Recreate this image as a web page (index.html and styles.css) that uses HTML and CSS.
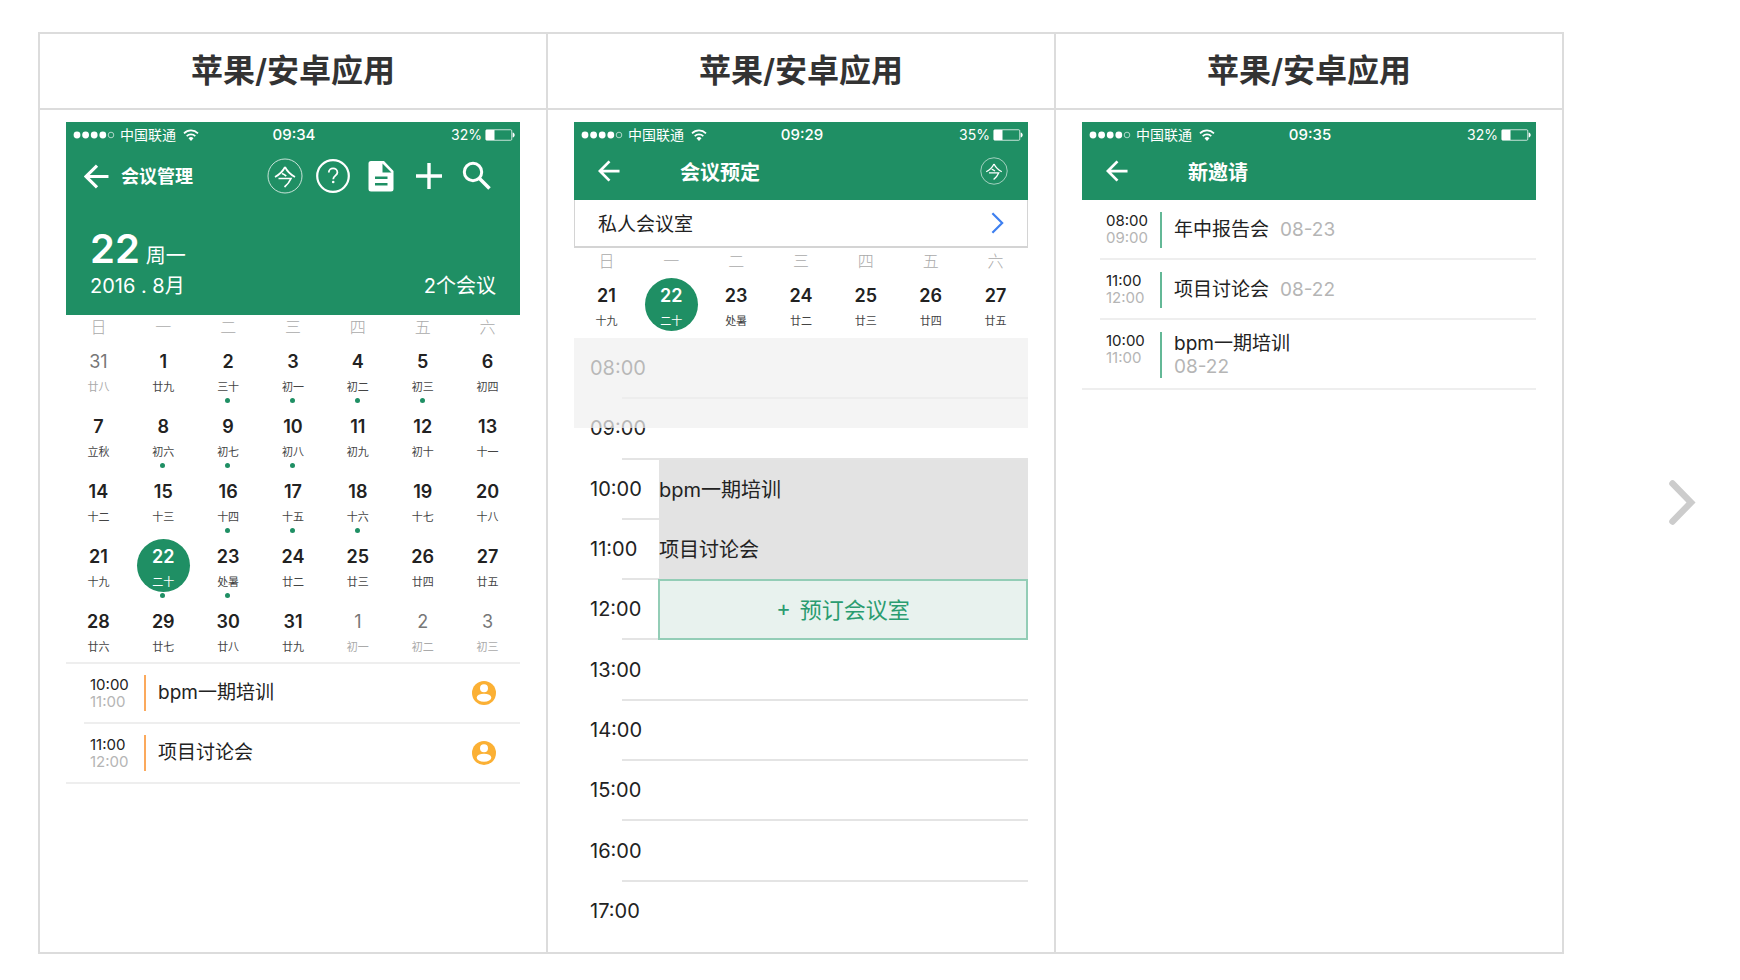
FILE: index.html
```html
<!DOCTYPE html>
<html lang="zh-CN">
<head>
<meta charset="utf-8">
<title>苹果/安卓应用</title>
<link rel="stylesheet" href="styles.css">
</head>
<body>
<svg class="sprite" aria-hidden="true">
  <symbol id="signal" viewBox="0 0 42 10"><g fill="#fff"><circle cx="4" cy="5" r="3.4"/><circle cx="12.6" cy="5" r="3.4"/><circle cx="21.2" cy="5" r="3.4"/><circle cx="29.8" cy="5" r="3.4"/></g><circle cx="38" cy="5" r="2.8" fill="none" stroke="#fff" stroke-width=".8" opacity=".8"/></symbol>
  <symbol id="wifi" viewBox="0 0 16 12"><g fill="none" stroke="#fff" stroke-width="1.7"><path d="M1 4.3a10 10 0 0 1 14 0"/><path d="M3.7 7.1a6.200 6.200 0 0 1 8.600 0"/></g><path d="M8 12 5.500 9.300a3.600 3.600 0 0 1 5 0z" fill="#fff"/></symbol>
  <symbol id="battery" viewBox="0 0 30 12"><rect x=".75" y=".75" width="26" height="10.500" rx="1" fill="none" stroke="#fff" opacity=".75"/><rect x="1" y="1" width="8.500" height="10" fill="#fff"/><path d="M27.600 3.500c2.800.5 2.800 4.500 0 5z" fill="#fff"/></symbol>
  <symbol id="back" viewBox="0 0 24 24"><path d="M23.500 12H2.500M12.500 1.500 2 12l10.500 10.500" fill="none" stroke="#fff" stroke-width="3"/></symbol>
  <symbol id="today" viewBox="0 0 36 36"><circle cx="18" cy="18" r="17" fill="none" stroke="#fff" opacity=".75"/><path d="M18 9C16 13 12.500 16.500 8 19M18 9c2 4 5.500 7.500 10 10M15 15.500c2 .8 3 1.500 4.200 2.700M11.500 20.500h12.500c-1.500 3.500-3.500 6-6.500 8.500" fill="none" stroke="#fff" stroke-width="1.700"/></symbol>
  <symbol id="help" viewBox="0 0 36 36"><circle cx="18" cy="18" r="15.800" fill="none" stroke="#fff" stroke-width="2.200"/><path d="M13.800 14.600c0-5.600 8.600-5.600 8.600 0 0 3-4.200 3.200-4.200 6.600" fill="none" stroke="#fff" stroke-width="1.800"/><circle cx="18.200" cy="24" r="1.300" fill="#fff"/></symbol>
  <symbol id="doc" viewBox="0 0 36 36"><path fill="#fff" fill-rule="evenodd" d="M8 3H21l9.500 10v18a2.500 2.500 0 0 1-2.500 2.500H8A2.500 2.500 0 0 1 5.500 31V5.500A2.500 2.500 0 0 1 8 3zM19.500 5.500V14.500h9zM12 18.500v2.500h12.500v-2.500zM12 25v2.500h12.500V25z"/></symbol>
  <symbol id="plus" viewBox="0 0 36 36"><path d="M18 5v26M5 18h26" stroke="#fff" stroke-width="3.400"/></symbol>
  <symbol id="search" viewBox="0 0 36 36"><circle cx="14" cy="14" r="8.700" fill="none" stroke="#fff" stroke-width="3"/><path d="m20 20 10.500 10.500" stroke="#fff" stroke-width="3.600"/></symbol>
  <symbol id="person" viewBox="0 0 24 24"><circle cx="12" cy="12" r="12" fill="#fbb034"/><circle cx="12" cy="7.300" r="4" fill="#fff"/><ellipse cx="12" cy="16.700" rx="7.300" ry="4" fill="#fff"/></symbol>
</svg>

<main class="page">
  <table class="showcase">
    <thead>
      <tr><th scope="col">苹果/安卓应用</th><th scope="col">苹果/安卓应用</th><th scope="col">苹果/安卓应用</th></tr>
    </thead>
    <tbody>
      <tr>
        <td>
          <section class="phone">
            <header class="head">
              <div class="status">
                <span class="carrier"><svg class="signal"><use href="#signal"/></svg>中国联通<svg class="wifi"><use href="#wifi"/></svg></span>
                <time class="clock">09:34</time>
                <span class="power">32%<svg class="battery"><use href="#battery"/></svg></span>
              </div>
              <div class="bar bar-tools">
                <button class="icon-btn back" aria-label="返回"><svg><use href="#back"/></svg></button>
                <h2 class="bar-title small">会议管理</h2>
                <div class="tools">
                  <button class="icon-btn" aria-label="今天"><svg><use href="#today"/></svg></button>
                  <button class="icon-btn" aria-label="帮助"><svg><use href="#help"/></svg></button>
                  <button class="icon-btn" aria-label="文档"><svg><use href="#doc"/></svg></button>
                  <button class="icon-btn" aria-label="新建"><svg><use href="#plus"/></svg></button>
                  <button class="icon-btn" aria-label="搜索"><svg><use href="#search"/></svg></button>
                </div>
              </div>
              <div class="summary">
                <p class="today"><strong>22</strong><span>周一</span></p>
                <p class="month"><span>2016 . 8月</span><span>2个会议</span></p>
              </div>
            </header>
            <div class="week"><span>日</span><span>一</span><span>二</span><span>三</span><span>四</span><span>五</span><span>六</span></div>
            <div class="days">
              <button class="day muted"><b>31</b><i>廿八</i></button>
              <button class="day"><b>1</b><i>廿九</i></button>
              <button class="day dot"><b>2</b><i>三十</i></button>
              <button class="day dot"><b>3</b><i>初一</i></button>
              <button class="day dot"><b>4</b><i>初二</i></button>
              <button class="day dot"><b>5</b><i>初三</i></button>
              <button class="day"><b>6</b><i>初四</i></button>
              <button class="day"><b>7</b><i>立秋</i></button>
              <button class="day dot"><b>8</b><i>初六</i></button>
              <button class="day dot"><b>9</b><i>初七</i></button>
              <button class="day dot"><b>10</b><i>初八</i></button>
              <button class="day"><b>11</b><i>初九</i></button>
              <button class="day"><b>12</b><i>初十</i></button>
              <button class="day"><b>13</b><i>十一</i></button>
              <button class="day"><b>14</b><i>十二</i></button>
              <button class="day"><b>15</b><i>十三</i></button>
              <button class="day dot"><b>16</b><i>十四</i></button>
              <button class="day dot"><b>17</b><i>十五</i></button>
              <button class="day dot"><b>18</b><i>十六</i></button>
              <button class="day"><b>19</b><i>十七</i></button>
              <button class="day"><b>20</b><i>十八</i></button>
              <button class="day"><b>21</b><i>十九</i></button>
              <button class="day dot selected"><b>22</b><i>二十</i></button>
              <button class="day dot"><b>23</b><i>处暑</i></button>
              <button class="day"><b>24</b><i>廿二</i></button>
              <button class="day"><b>25</b><i>廿三</i></button>
              <button class="day"><b>26</b><i>廿四</i></button>
              <button class="day"><b>27</b><i>廿五</i></button>
              <button class="day"><b>28</b><i>廿六</i></button>
              <button class="day"><b>29</b><i>廿七</i></button>
              <button class="day"><b>30</b><i>廿八</i></button>
              <button class="day"><b>31</b><i>廿九</i></button>
              <button class="day muted"><b>1</b><i>初一</i></button>
              <button class="day muted"><b>2</b><i>初二</i></button>
              <button class="day muted"><b>3</b><i>初三</i></button>
            </div>
            <ul class="events agenda">
              <li class="event"><p class="span"><time>10:00</time><time>11:00</time></p><p class="topic">bpm一期培训</p><svg class="person"><use href="#person"/></svg></li>
              <li class="event"><p class="span"><time>11:00</time><time>12:00</time></p><p class="topic">项目讨论会</p><svg class="person"><use href="#person"/></svg></li>
            </ul>
          </section>
        </td>
        <td>
          <section class="phone">
            <header class="head">
              <div class="status">
                <span class="carrier"><svg class="signal"><use href="#signal"/></svg>中国联通<svg class="wifi"><use href="#wifi"/></svg></span>
                <time class="clock">09:29</time>
                <span class="power">35%<svg class="battery"><use href="#battery"/></svg></span>
              </div>
              <div class="bar">
                <button class="icon-btn back" aria-label="返回"><svg><use href="#back"/></svg></button>
                <h2 class="bar-title">会议预定</h2>
                <button class="icon-btn now" aria-label="今天"><svg><use href="#today"/></svg></button>
              </div>
            </header>
            <button class="room"><span>私人会议室</span><svg class="chevron" viewBox="0 0 14 24"><path d="m1.500 1.500 10.500 10.500-10.500 10.500" fill="none" stroke="#3f80f0" stroke-width="2.400"/></svg></button>
            <div class="week"><span>日</span><span>一</span><span>二</span><span>三</span><span>四</span><span>五</span><span>六</span></div>
            <div class="days">
              <button class="day"><b>21</b><i>十九</i></button>
              <button class="day selected"><b>22</b><i>二十</i></button>
              <button class="day"><b>23</b><i>处暑</i></button>
              <button class="day"><b>24</b><i>廿二</i></button>
              <button class="day"><b>25</b><i>廿三</i></button>
              <button class="day"><b>26</b><i>廿四</i></button>
              <button class="day"><b>27</b><i>廿五</i></button>
            </div>
            <ol class="slots">
              <li class="slot"><time>08:00</time><div class="lane"></div></li>
              <li class="slot"><time>09:00</time><div class="lane"></div></li>
              <li class="slot"><time>10:00</time><div class="lane"><p class="busy">bpm一期培训</p></div></li>
              <li class="slot"><time>11:00</time><div class="lane"><p class="busy">项目讨论会</p></div></li>
              <li class="slot"><time>12:00</time><div class="lane"><button class="book"><span>+</span>预订会议室</button></div></li>
              <li class="slot"><time>13:00</time><div class="lane"></div></li>
              <li class="slot"><time>14:00</time><div class="lane"></div></li>
              <li class="slot"><time>15:00</time><div class="lane"></div></li>
              <li class="slot"><time>16:00</time><div class="lane"></div></li>
              <li class="slot"><time>17:00</time><div class="lane"></div></li>
            </ol>
          </section>
        </td>
        <td>
          <section class="phone">
            <header class="head">
              <div class="status">
                <span class="carrier"><svg class="signal"><use href="#signal"/></svg>中国联通<svg class="wifi"><use href="#wifi"/></svg></span>
                <time class="clock">09:35</time>
                <span class="power">32%<svg class="battery"><use href="#battery"/></svg></span>
              </div>
              <div class="bar">
                <button class="icon-btn back" aria-label="返回"><svg><use href="#back"/></svg></button>
                <h2 class="bar-title">新邀请</h2>
              </div>
            </header>
            <ul class="events invites">
              <li class="event"><p class="span"><time>08:00</time><time>09:00</time></p><p class="topic">年中报告会<time>08-23</time></p></li>
              <li class="event"><p class="span"><time>11:00</time><time>12:00</time></p><p class="topic">项目讨论会<time>08-22</time></p></li>
              <li class="event"><p class="span"><time>10:00</time><time>11:00</time></p><p class="topic stacked">bpm一期培训<time>08-22</time></p></li>
            </ul>
          </section>
        </td>
      </tr>
    </tbody>
  </table>
  <button class="next" aria-label="下一页"><svg viewBox="0 0 28 48"><path d="M4.500 4.500 23 23.500 4.500 42.500" fill="none" stroke="#ccc" stroke-width="6.500" stroke-linecap="round"/></svg></button>
</main>
</body>
</html>
```
FILE: styles.css
```css
* { box-sizing: border-box; }
body, h2, p, ul, ol { margin: 0; padding: 0; }
body {
  background: #fff;
  color: #222;
  font-family: Inter, "Noto Sans CJK SC", sans-serif;
}
ul, ol { list-style: none; }
button {
  padding: 0;
  border: 0;
  background: none;
  color: inherit;
  font: inherit;
}
svg { display: block; flex: none; }
.sprite { position: absolute; width: 0; height: 0; }

.page {
  display: grid;
  grid-template-columns: 1fr 176px;
  align-items: start;
  padding: 32px 0 24px 38px;
}
.showcase {
  width: 100%;
  table-layout: fixed;
  border-collapse: collapse;
}
.showcase th, .showcase td { border: 2px solid #dcdcdc; }
.showcase th {
  height: 76px;
  padding: 0;
  color: #333;
  font-size: 32px;
  font-weight: 600;
  line-height: 48px;
}
.showcase td {
  padding: 12px 26px 10px;
  vertical-align: top;
}

/* Phone header */
.head { background: #1f8f64; color: #fff; }
.status {
  display: grid;
  grid-template-columns: 1fr auto 1fr;
  align-items: center;
  height: 26px;
  padding: 0 5px 0 7px;
  font-size: 14px;
  line-height: 20px;
}
.carrier, .power { display: flex; align-items: center; }
.power { justify-content: flex-end; gap: 3px; }
.signal { width: 42px; height: 10px; margin-right: 5px; }
.wifi { width: 16px; height: 12px; margin-left: 7px; }
.battery { width: 30px; height: 12px; }
.clock { font-weight: 500; font-size: 15px; }
.bar {
  display: flex;
  align-items: center;
  height: 52px;
  padding: 0 20px 6px 24px;
}
.icon-btn svg { width: 36px; height: 36px; }
.back svg { width: 22px; height: 22px; }
.bar-title {
  margin-left: 60px;
  padding-top: 4px;
  font-size: 20px;
  font-weight: 600;
  line-height: 28px;
}
.now { margin-left: auto; }
.now svg { width: 28px; height: 28px; }
.bar-tools { height: 56px; padding: 0 25px 0 18px; }
.bar-tools .back svg { width: 25px; height: 25px; }
.bar-title.small { margin-left: 12px; padding-top: 2px; font-size: 18px; }
.tools { display: flex; gap: 12px; margin-left: auto; }
.summary { padding: 29px 24px 15px; font-size: 20px; }
.today { display: flex; align-items: baseline; gap: 6px; line-height: 32px; }
.today strong { font-size: 40px; font-weight: 600; }
.month { display: flex; justify-content: space-between; line-height: 28px; }

/* Calendar */
.week, .days { display: grid; grid-template-columns: repeat(7, 1fr); }
.week {
  padding-bottom: 5px;
  color: #aaa;
  font-size: 16px;
  font-weight: 300;
  line-height: 24px;
  text-align: center;
}
.days { row-gap: 8px; justify-items: center; }
.day {
  position: relative;
  display: flex;
  flex-direction: column;
  align-items: center;
  gap: 7px;
  width: 53px;
  height: 53px;
  margin-bottom: 4px;
  padding-top: 7px;
  border-radius: 50%;
}
.day b { font-size: 18px; font-weight: 600; line-height: 22px; }
.day i { color: #444; font-size: 11px; font-style: normal; line-height: 14px; }
.day.muted b { color: #777; font-weight: 400; }
.day.muted i { color: #aaa; }
.day.selected { background: #1f8f64; color: #fff; }
.day.selected i { color: #fff; }
.day.dot::after {
  content: "";
  position: absolute;
  top: calc(100% + 1px);
  left: calc(50% - 3px);
  width: 5px;
  height: 5px;
  border-radius: 50%;
  background: #1f8f64;
}

/* Event lists */
.event {
  display: grid;
  grid-template-columns: 54px 1fr auto;
  align-items: center;
  padding: 11px 24px 11px 6px;
  border-bottom: 2px solid #eee;
}
.events { padding-left: 18px; }
.event:last-child { margin-left: -18px; padding-left: 24px; }
.agenda { margin-top: 1px; border-top: 2px solid #eee; }
.span { font-size: 15px; line-height: 17px; }
.span time { display: block; }
.span time + time { color: #b5b5b5; }
.topic {
  display: flex;
  align-items: center;
  min-height: 36px;
  padding-left: 12px;
  border-left: 2px solid #fba95c;
  font-size: 19px;
  line-height: 24px;
}
.person { width: 24px; height: 24px; }
.invites .event { align-items: start; padding-top: 12px; padding-bottom: 10px; }
.invites .topic { gap: 11px; border-color: #63b896; }
.invites .topic time { color: #b5b5b5; }
.topic.stacked { flex-direction: column; align-items: flex-start; line-height: 23px; }
.invites .topic.stacked { gap: 0; }

/* Room booking */
.room {
  display: flex;
  align-items: center;
  justify-content: space-between;
  width: 100%;
  height: 48px;
  margin-bottom: 1px;
  padding: 0 23px 1px;
  border: solid #d4d4d4;
  border-width: 0 1px 2px;
  font-size: 19px;
}
.chevron { width: 13px; height: 24px; }
.slots {
  position: relative;
  display: grid;
  grid-auto-rows: 1fr;
  min-height: 604px;
  margin-top: 3px;
  padding-top: 1px;
  font-size: 20px;
}
.slots::before {
  content: "";
  position: absolute;
  inset: 0 0 auto;
  height: 90px;
  background: rgba(240, 240, 240, .73);
}
.slot { display: grid; grid-template-columns: 48px 1fr; }
.slot time {
  align-self: center;
  width: 0;
  padding: 0 0 2px 16px;
  line-height: 28px;
}
.lane {
  display: grid;
  padding-left: 37px;
  border-bottom: 2px solid #e4e4e4;
}
.slot:last-child .lane { border-color: transparent; }
.busy {
  display: flex;
  align-items: center;
  margin-bottom: -2px;
  padding-bottom: 3px;
  background: #e3e3e3;
}
.book {
  display: flex;
  align-items: center;
  justify-content: center;
  gap: 9px;
  margin: -1px 0 -2px -1px;
  padding-bottom: 3px;
  border: 2px solid #93cdb6;
  background: #e8f2ee;
  color: #2a9c70;
  font-size: 22px;
}

.next { align-self: center; justify-self: center; margin: 20px 0 0 60px; }
.next svg { width: 28px; height: 48px; }
```
